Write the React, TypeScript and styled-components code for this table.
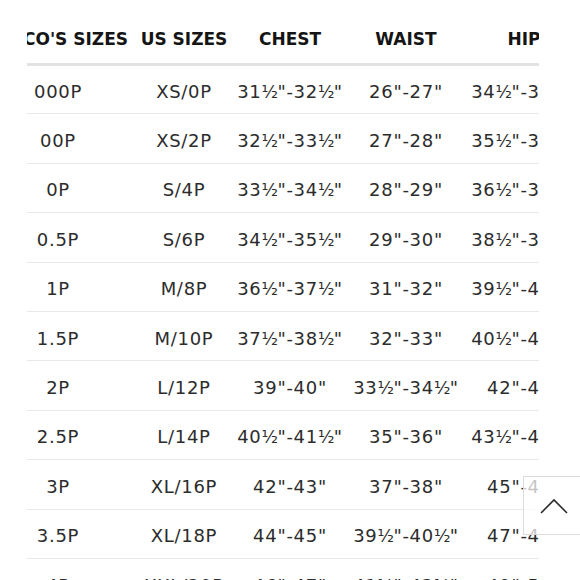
import React, { useLayoutEffect, useRef } from "react";
import styled, { createGlobalStyle } from "styled-components";

const Global = createGlobalStyle`
  html, body { margin: 0; padding: 0; background: #fff; }
  body { font-family: "DejaVu Sans", "Liberation Sans", sans-serif; width: 580px; height: 580px; overflow: hidden; }
`;

const Page = styled.div`
  padding: 15px 0 0 27px;
`;

const Scroller = styled.div`
  width: 512px;
  overflow: hidden;
`;

const Table = styled.table`
  border-collapse: collapse;
  table-layout: fixed;
  width: 602px;
`;

const HeadCell = styled.th<{ $end?: boolean }>`
  height: 48px;
  padding: 0 ${(p) => (p.$end ? "7px" : "0")} 0 0;
  font-size: 17px;
  font-weight: 700;
  color: #151515;
  text-align: ${(p) => (p.$end ? "right" : "center")};
  white-space: nowrap;
  border-bottom: 3px solid #e2e2e2;
  vertical-align: middle;
`;

const Row = styled.tr`
  height: 49.4px;
  border-bottom: 1px solid #e9e9e9;
`;

const Cell = styled.td`
  padding: 4px 0 0;
  font-size: 18px;
  letter-spacing: 0.7px;
  color: #2c2c2c;
  text-align: center;
  white-space: nowrap;
  vertical-align: middle;
`;

const Half = styled.span`
  font-size: 17px;
  letter-spacing: -1.6px;
  margin-right: 1px;
`;

const TopButton = styled.button`
  position: fixed;
  left: 523px;
  top: 476px;
  width: 66px;
  height: 59px;
  border: 1px solid #dcdcdc;
  background: rgba(255, 255, 255, 0.72);
  display: flex;
  align-items: center;
  justify-content: flex-start;
  padding: 0 0 0 16px;
  cursor: pointer;
`;

const widths = [154, 98, 114, 118, 118];
const headers = ["CO'S SIZES", "US SIZES", "CHEST", "WAIST", "HIP"];
const rows: string[][] = [
  ["000P", "XS/0P", "31½\"-32½\"", "26\"-27\"", "34½\"-35½\""],
  ["00P", "XS/2P", "32½\"-33½\"", "27\"-28\"", "35½\"-36½\""],
  ["0P", "S/4P", "33½\"-34½\"", "28\"-29\"", "36½\"-37½\""],
  ["0.5P", "S/6P", "34½\"-35½\"", "29\"-30\"", "38½\"-39½\""],
  ["1P", "M/8P", "36½\"-37½\"", "31\"-32\"", "39½\"-40½\""],
  ["1.5P", "M/10P", "37½\"-38½\"", "32\"-33\"", "40½\"-41½\""],
  ["2P", "L/12P", "39\"-40\"", "33½\"-34½\"", "42\"-43\""],
  ["2.5P", "L/14P", "40½\"-41½\"", "35\"-36\"", "43½\"-44½\""],
  ["3P", "XL/16P", "42\"-43\"", "37\"-38\"", "45\"-46\""],
  ["3.5P", "XL/18P", "44\"-45\"", "39½\"-40½\"", "47\"-48\""],
  ["4P", "XXL/20P", "46\"-47\"", "41½\"-42½\"", "49\"-50\""],
];

function Measure({ text }: { text: string }) {
  const parts = text.split("½");
  return (
    <>
      {parts.map((p, i) => (
        <React.Fragment key={i}>
          {p}
          {i < parts.length - 1 && <Half>½</Half>}
        </React.Fragment>
      ))}
    </>
  );
}

export default function App() {
  const ref = useRef<HTMLDivElement>(null);
  useLayoutEffect(() => {
    if (ref.current) ref.current.scrollLeft = 46;
  }, []);
  return (
    <>
      <Global />
      <Page>
        <Scroller ref={ref}>
          <Table>
            <colgroup>
              {widths.map((w, i) => (
                <col key={i} style={{ width: w }} />
              ))}
            </colgroup>
            <thead>
              <tr>
                {headers.map((h, i) => (
                  <HeadCell key={h} $end={i === 0}>
                    {h}
                  </HeadCell>
                ))}
              </tr>
            </thead>
            <tbody>
              {rows.map((r) => (
                <Row key={r[0]}>
                  {r.map((c, i) => (
                    <Cell key={i}>
                      <Measure text={c} />
                    </Cell>
                  ))}
                </Row>
              ))}
            </tbody>
          </Table>
        </Scroller>
      </Page>
      <TopButton aria-label="Back to top">
        <svg width="28" height="16" viewBox="0 0 28 16" fill="none">
          <polyline points="1,15 14,2 27,15" stroke="#2a2a2a" strokeWidth="1.6" />
        </svg>
      </TopButton>
    </>
  );
}
